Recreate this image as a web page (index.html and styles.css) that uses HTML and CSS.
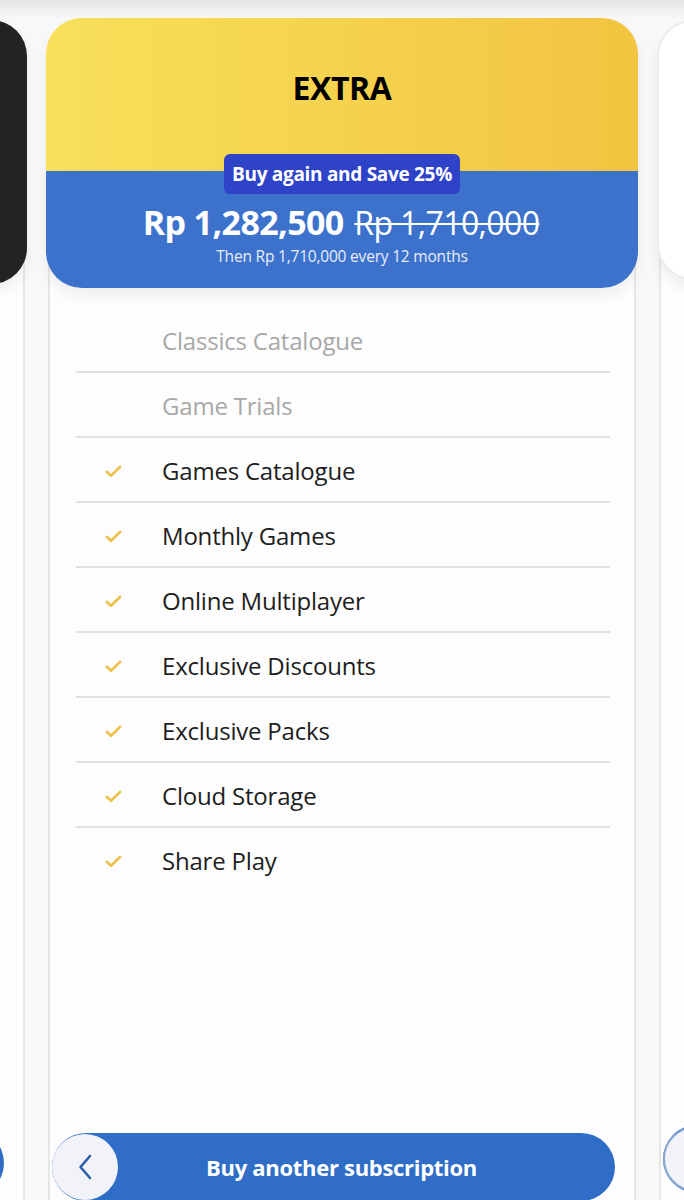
FILE: index.html
```html
<!DOCTYPE html>
<html>
<head>
    <title>PlayStation Plus - Extra</title>
    <link rel="stylesheet" href="styles.css">
</head>
<body>
    <div class="top-shade"></div>

    <div class="track">
        <!-- previous plan, mostly off screen -->
        <div class="slide">
            <div class="head head-dark">
                <div class="head-title">ESSENTIAL</div>
            </div>
            <div class="card">
                <ul class="features">
                    <li><span class="check"></span><span class="name">Monthly Games</span></li>
                    <li><span class="check"></span><span class="name">Online Multiplayer</span></li>
                    <li><span class="check"></span><span class="name">Exclusive Discounts</span></li>
                    <li><span class="check"></span><span class="name">Exclusive Packs</span></li>
                    <li><span class="check"></span><span class="name">Cloud Storage</span></li>
                    <li><span class="check"></span><span class="name">Share Play</span></li>
                    <li><span class="check"></span><span class="name">Game Help</span></li>
                    <li><span class="check"></span><span class="name">Voice Chat</span></li>
                    <li><span class="check"></span><span class="name">Party</span></li>
                </ul>
                <div class="buy">
                    <span class="back"></span>
                    <span class="buy-label">Buy another subscription</span>
                </div>
            </div>
        </div>

        <!-- current plan -->
        <div class="slide">
            <div class="head">
                <div class="head-top">
                    <div class="head-title">EXTRA</div>
                </div>
                <div class="head-bottom">
                    <div class="badge">Buy again and Save 25%</div>
                    <div class="price">
                        <span class="price-now">Rp 1,282,500</span>
                        <span class="price-old">Rp 1,710,000</span>
                    </div>
                    <div class="price-note">Then Rp 1,710,000 every 12 months</div>
                </div>
            </div>
            <div class="card">
                <ul class="features">
                    <li class="off"><span class="check"></span><span class="name">Classics Catalogue</span></li>
                    <li class="off"><span class="check"></span><span class="name">Game Trials</span></li>
                    <li>
                        <span class="check"><svg width="17" height="13" viewBox="0 0 17 13"><path d="M1.8 6.8 L6 10.8 L15.2 1.8" fill="none" stroke="#ecc24c" stroke-width="2.6" stroke-linecap="round" stroke-linejoin="round"/></svg></span>
                        <span class="name">Games Catalogue</span>
                    </li>
                    <li>
                        <span class="check"><svg width="17" height="13" viewBox="0 0 17 13"><path d="M1.8 6.8 L6 10.8 L15.2 1.8" fill="none" stroke="#ecc24c" stroke-width="2.6" stroke-linecap="round" stroke-linejoin="round"/></svg></span>
                        <span class="name">Monthly Games</span>
                    </li>
                    <li>
                        <span class="check"><svg width="17" height="13" viewBox="0 0 17 13"><path d="M1.8 6.8 L6 10.8 L15.2 1.8" fill="none" stroke="#ecc24c" stroke-width="2.6" stroke-linecap="round" stroke-linejoin="round"/></svg></span>
                        <span class="name">Online Multiplayer</span>
                    </li>
                    <li>
                        <span class="check"><svg width="17" height="13" viewBox="0 0 17 13"><path d="M1.8 6.8 L6 10.8 L15.2 1.8" fill="none" stroke="#ecc24c" stroke-width="2.6" stroke-linecap="round" stroke-linejoin="round"/></svg></span>
                        <span class="name">Exclusive Discounts</span>
                    </li>
                    <li>
                        <span class="check"><svg width="17" height="13" viewBox="0 0 17 13"><path d="M1.8 6.8 L6 10.8 L15.2 1.8" fill="none" stroke="#ecc24c" stroke-width="2.6" stroke-linecap="round" stroke-linejoin="round"/></svg></span>
                        <span class="name">Exclusive Packs</span>
                    </li>
                    <li>
                        <span class="check"><svg width="17" height="13" viewBox="0 0 17 13"><path d="M1.8 6.8 L6 10.8 L15.2 1.8" fill="none" stroke="#ecc24c" stroke-width="2.6" stroke-linecap="round" stroke-linejoin="round"/></svg></span>
                        <span class="name">Cloud Storage</span>
                    </li>
                    <li>
                        <span class="check"><svg width="17" height="13" viewBox="0 0 17 13"><path d="M1.8 6.8 L6 10.8 L15.2 1.8" fill="none" stroke="#ecc24c" stroke-width="2.6" stroke-linecap="round" stroke-linejoin="round"/></svg></span>
                        <span class="name">Share Play</span>
                    </li>
                </ul>
                <div class="buy">
                    <span class="back">
                        <svg width="14" height="26" viewBox="0 0 14 26"><path d="M12 2 L2.5 13 L12 24" fill="none" stroke="#2d5ea8" stroke-width="2.6" stroke-linecap="round" stroke-linejoin="round"/></svg>
                    </span>
                    <span class="buy-label">Buy another subscription</span>
                </div>
            </div>
        </div>

        <!-- next plan, mostly off screen -->
        <div class="slide">
            <div class="head head-light">
                <div class="head-title">PREMIUM</div>
            </div>
            <div class="card">
                <ul class="features">
                    <li><span class="check"></span><span class="name">Classics Catalogue</span></li>
                    <li><span class="check"></span><span class="name">Game Trials</span></li>
                    <li><span class="check"></span><span class="name">Games Catalogue</span></li>
                    <li><span class="check"></span><span class="name">Monthly Games</span></li>
                    <li><span class="check"></span><span class="name">Online Multiplayer</span></li>
                    <li><span class="check"></span><span class="name">Exclusive Discounts</span></li>
                    <li><span class="check"></span><span class="name">Exclusive Packs</span></li>
                    <li><span class="check"></span><span class="name">Cloud Storage</span></li>
                    <li><span class="check"></span><span class="name">Share Play</span></li>
                </ul>
                <div class="buy">
                    <span class="back back-ring"></span>
                    <span class="buy-label">Buy another subscription</span>
                </div>
            </div>
        </div>
    </div>
</body>
</html>
```

FILE: styles.css
```css
body {
    margin: 0;
    padding: 0;
    background-color: #f8f8f8;
    font-family: "Open Sans", "Noto Sans", sans-serif;
    overflow: hidden;
}

.top-shade {
    height: 18px;
    background: linear-gradient(#e4e4e4, #f8f8f8);
}

.track {
    display: flex;
    gap: 19px;
    margin-left: -565px;
    width: 2000px;
}

.slide {
    width: 592px;
    flex: none;
    display: flex;
    flex-direction: column;
}

/* header of the plan */
.head {
    height: 270px;
    border-radius: 36px;
    overflow: hidden;
    position: relative;
    z-index: 1;
    box-shadow: 0 8px 14px rgba(0, 0, 0, 0.06);
    display: flex;
    flex-direction: column;
}

.head-dark {
    background-color: #232323;
    height: 264px;
    margin-top: 2px;
    justify-content: center;
    align-items: center;
}

.head-light {
    background-color: #ffffff;
    height: 260px;
    margin-top: 2px;
    border: 2px solid #ececec;
    box-sizing: border-box;
    justify-content: center;
    align-items: center;
}

.head-dark .head-title {
    color: #ffffff;
}

.head-top {
    height: 153px;
    background: linear-gradient(90deg, #f8e05a, #f2c440);
    display: flex;
    justify-content: center;
    padding-top: 51px;
    box-sizing: border-box;
}

.head-title {
    font-size: 32px;
    font-weight: bold;
    color: #000000;
    letter-spacing: -0.4px;
    line-height: 38px;
}

.head-bottom {
    flex: 1;
    background-color: #3c72cc;
    display: flex;
    flex-direction: column;
    align-items: center;
}

.badge {
    margin-top: -17px;
    background-color: #2e43c8;
    color: #ffffff;
    font-weight: bold;
    font-size: 19px;
    line-height: 40px;
    height: 40px;
    padding: 0 8px;
    border-radius: 6px;
    letter-spacing: -0.3px;
}

.price {
    color: #ffffff;
    margin-top: 8px;
    line-height: 40px;
    letter-spacing: -0.6px;
    padding-right: 2px;
}

.price-now {
    font-size: 34px;
    font-weight: bold;
}

.price-old {
    font-size: 32px;
    text-decoration: line-through;
    text-decoration-thickness: 2px;
    margin-left: 7px;
}

.price-note {
    color: #e8eefa;
    font-size: 15.5px;
    line-height: 20px;
    margin-top: -3px;
    letter-spacing: -0.2px;
}

/* card body */
.card {
    margin: -40px 2px 0;
    padding-top: 58px;
    height: 1000px;
    background-color: #fdfdfd;
    border: 2px solid #e6e6e6;
    border-radius: 0 0 36px 36px;
    display: flex;
    flex-direction: column;
}

.features {
    list-style: none;
    margin: 0 24px 0 26px;
    padding: 0;
}

.features li {
    height: 63px;
    display: flex;
    align-items: center;
    border-bottom: 2px solid #e1e1e1;
}

.features li:last-child {
    border-bottom: none;
}

.check {
    width: 86px;
    padding-left: 29px;
    padding-top: 3px;
    box-sizing: border-box;
    display: flex;
    align-items: center;
}

.name {
    font-size: 24px;
    color: #1e1e1e;
    letter-spacing: -0.2px;
    padding-top: 1px;
}

.off .name {
    color: #a8a8a8;
}

/* bottom button */
.buy {
    margin: 242px 19px 0 2px;
    height: 68px;
    border-radius: 34px;
    background-color: #2f6dc6;
    display: flex;
    align-items: center;
    position: relative;
}

.back {
    width: 66px;
    height: 66px;
    border-radius: 50%;
    background-color: #f1f3f9;
    display: flex;
    align-items: center;
    justify-content: center;
    flex: none;
}

.back-ring {
    border: 2px solid #8aa6d4;
    box-sizing: border-box;
}

.buy-label {
    flex: 1;
    text-align: center;
    color: #ffffff;
    font-weight: bold;
    font-size: 22px;
    letter-spacing: -0.3px;
    margin-left: -66px;
    padding-left: 16px;
}
```
